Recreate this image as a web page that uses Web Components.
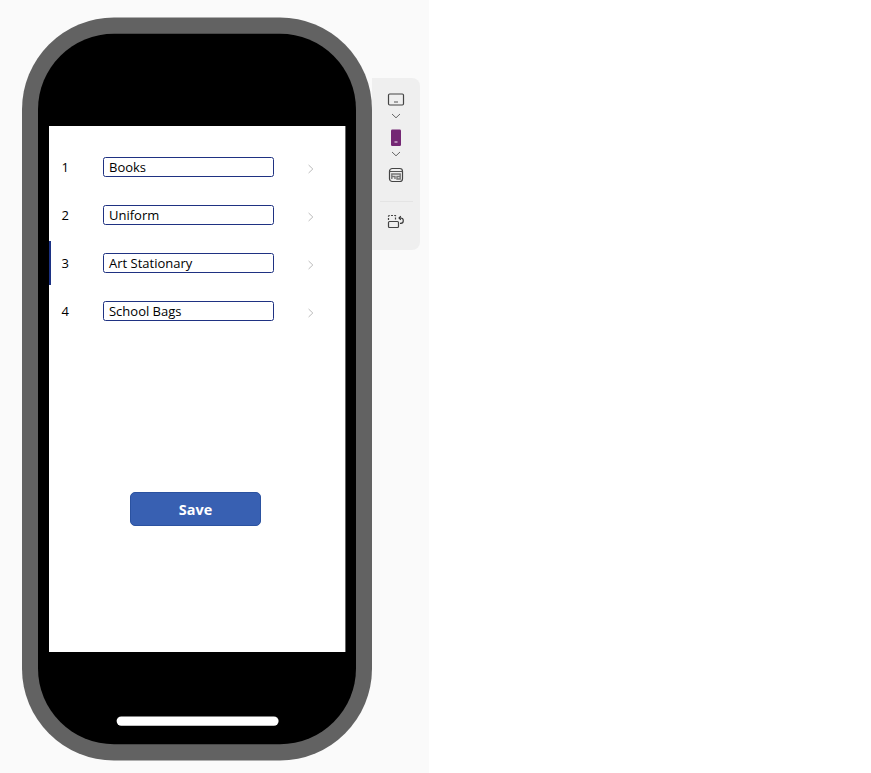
<!DOCTYPE html>
<html lang="en">
<head>
<meta charset="utf-8">
<title>App preview</title>
<style>
html,body{margin:0;height:100%;background:#fff}
body{font-family:"Open Sans","Noto Sans",sans-serif;color:#000;overflow:hidden}
</style>
</head>
<body>
<preview-stage>
  <phone-frame>
    <item-gallery>
      <gallery-row number="1" value="Books"></gallery-row>
      <gallery-row number="2" value="Uniform"></gallery-row>
      <gallery-row number="3" value="Art Stationary" selected></gallery-row>
      <gallery-row number="4" value="School Bags"></gallery-row>
    </item-gallery>
    <save-button>Save</save-button>
  </phone-frame>
  <device-toolbar></device-toolbar>
</preview-stage>
<script>
const define = (name, html, setup) => customElements.define(name, class extends HTMLElement {
  connectedCallback() {
    if (this.shadowRoot) return;
    const t = document.createElement('template');
    t.innerHTML = html;
    this.attachShadow({mode: 'open'}).append(t.content.cloneNode(true));
    if (setup) setup(this, this.shadowRoot);
  }
});

define('preview-stage', `<style>
:host{display:flex;align-items:flex-start;box-sizing:border-box;width:429px;height:773px;padding:17px 0 0 22px;background:#fafafa}
</style><slot></slot>`);

define('phone-frame', `<style>
:host{display:grid;width:350px;height:744px;flex:none}
:host>*{grid-area:1/1}
.shell{display:block}
.content{display:flex;flex-direction:column;align-items:center;padding-top:109px}
.screen{display:flex;flex-direction:column;box-sizing:border-box;width:296px;height:526px;flex:none;background:#fff;padding-top:17px}
</style>
<svg class="shell" width="350" height="744" viewBox="0 0 350 744"><rect y=".5" width="350" height="743" rx="92" fill="#626262"/><rect x="16" y="16.7" width="318" height="710.6" rx="76"/><rect x="94.6" y="699.4" width="162" height="9.4" rx="4.7" fill="#fff"/><rect x="323" y="109" width=".4" height="526" fill="#fff"/></svg>
<div class="content"><div class="screen"><slot></slot></div></div>`);

define('item-gallery', `<style>:host{display:flex;flex-direction:column}</style><slot></slot>`);

define('gallery-row', `<style>
:host{display:flex;align-items:center;height:48px;font-size:13px;line-height:18px}
.bar{width:2px;height:44px}
:host([selected]) .bar{background:#1c3284}
.num{width:41.4px;padding-left:10.6px}
.box{box-sizing:border-box;width:171px;height:20.5px;border:1px solid #1f3282;border-radius:2.5px;padding-left:5px;white-space:nowrap;line-height:19px}
svg{margin:3px 0 0 33px}
</style><div class="bar"></div><div class="num"></div><div class="box"></div>
<svg width="8" height="10" viewBox="0 0 8 10" fill="none" stroke="#aaa" stroke-width=".8"><path d="M1.6 1l4.2 4-4.2 4"/></svg>`,
(host, root) => {
  root.querySelector('.num').textContent = host.getAttribute('number');
  root.querySelector('.box').textContent = host.getAttribute('value');
});

define('save-button', `<style>
:host{display:flex;margin:157px 0 0 81px}
button{box-sizing:border-box;width:131px;height:34px;margin:0;padding:1px 0 0;border:1.5px solid #2b52a0;border-radius:5px;background:#3860b2;color:#fff;font:700 14.4px/20px "Open Sans","Noto Sans",sans-serif}
</style><button><slot></slot></button>`);

const chevron = '<svg width="10" height="6" viewBox="0 0 10 6"><path d="M1 1l4 3.8L9 1" stroke="#666"/></svg>';
define('device-toolbar', `<style>
:host{display:flex;flex-direction:column;align-items:center;box-sizing:border-box;width:48px;height:172px;margin-top:61px;padding-top:14px;border-radius:0 8px 8px 0;background:#efefef}
svg{display:block;fill:none;flex:none}
.c1,.c2{height:6px}
.c1{margin:7px 0 10px}.c2{margin:5px 0 10px}
hr{width:33px;height:1px;border:0;background:#e4e4e4;margin:18px 0 12px}
</style>
<svg width="18" height="14" viewBox="0 0 18 14"><rect x="1.5" y="2" width="15" height="11" rx="1.2" stroke="#444" stroke-width="1.2"/><path d="M7 10h4" stroke="#777" stroke-width="1.3"/></svg>
<div class="c1">${chevron}</div>
<svg width="10" height="17" viewBox="0 0 10 17"><rect y=".5" width="10" height="16.5" rx="1.2" fill="#742774"/><path d="M3.5 13h3" stroke="#d9bfd9" stroke-width="1.3"/></svg>
<div class="c2">${chevron}</div>
<svg width="16" height="16" viewBox="0 0 16 16"><rect x="1.5" y="1.5" width="13" height="13" rx="2.8" stroke="#444" stroke-width="1.2"/><path d="M1.5 4.5h13" stroke="#555"/><path d="M3.8 12V7h8.4v5H9V9.5h3M4 9.5h3V12" stroke="#777" stroke-width="1.4"/></svg>
<hr>
<svg width="18" height="16" viewBox="0 0 18 16"><rect x="1.5" y="7.5" width="10" height="6" rx="1" stroke="#444" stroke-width="1.2"/><path d="M1.5 6V2.5a1 1 0 0 1 1-1H8.5V6" stroke="#444" stroke-width="1.2" stroke-dasharray="2 1.2"/><path d="M12.2 4h1.4a2.7 2.7 0 0 1 0 5.4h-.6M13.8 2.2l-1.8 1.8 1.8 1.8" stroke="#333" stroke-width="1.1"/></svg>`);
</script>
</body>
</html>
